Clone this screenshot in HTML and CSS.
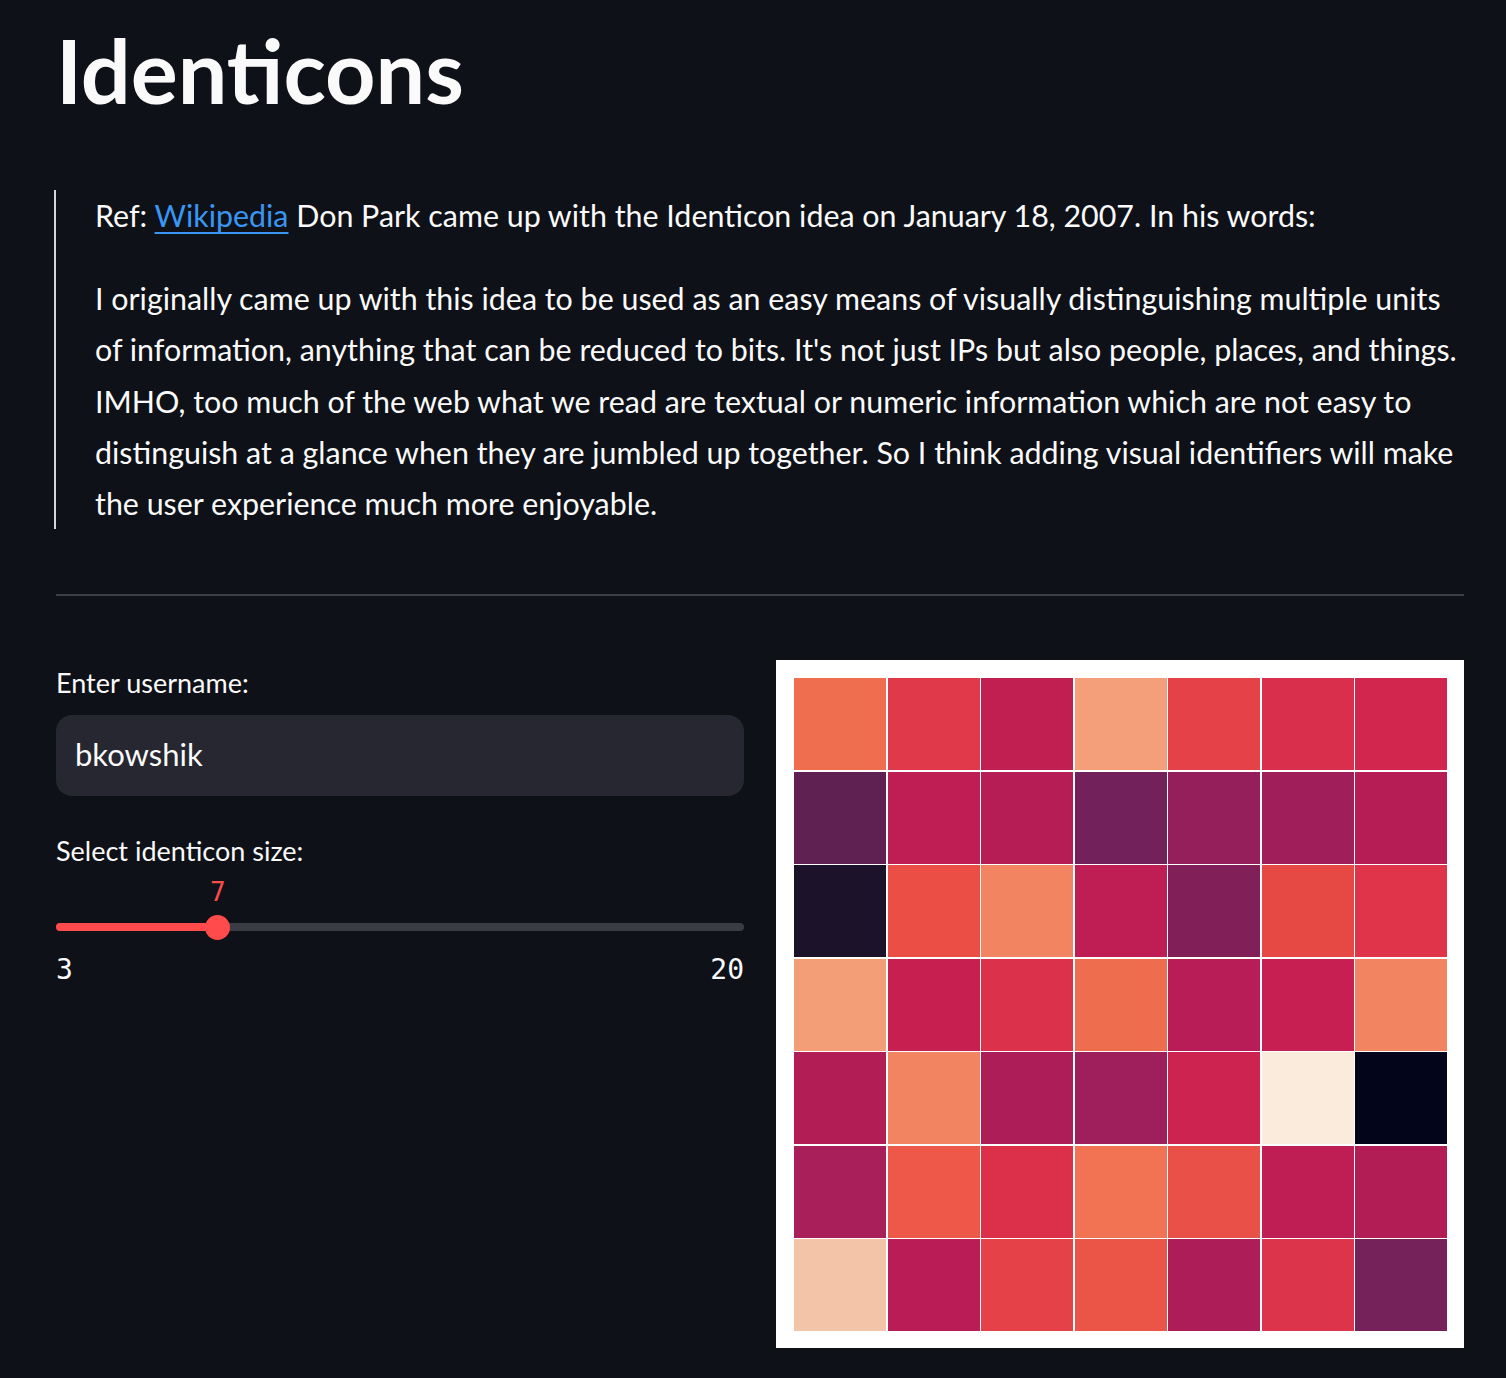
FILE: index.html
```html
<!DOCTYPE html>
<html lang="en">
<head>
<meta charset="utf-8">
<title>Identicons</title>
<link rel="stylesheet" href="styles.css">
</head>
<body>
<main class="page">
  <h1 class="title">Identicons</h1>
  <blockquote class="quote">
    <p>Ref: <a class="link" href="#">Wikipedia</a> Don Park came up with the Identicon idea on January 18, 2007. In his words:</p>
    <p>I originally came up with this idea to be used as an easy means of visually distinguishing multiple units of information, anything that can be reduced to bits. It's not just IPs but also people, places, and things. IMHO, too much of the web what we read are textual or numeric information which are not easy to distinguish at a glance when they are jumbled up together. So I think adding visual identifiers will make the user experience much more enjoyable.</p>
  </blockquote>
  <hr class="divider">
  <section class="columns">
    <div class="controls">
      <div class="field">
        <label class="label">Enter username:</label>
        <div class="input">bkowshik</div>
      </div>
      <div class="field">
        <label class="label">Select identicon size:</label>
        <div class="slider">
          <div class="track">
            <div class="fill" style="width:23.53%"></div>
            <div class="thumb" style="left:23.53%"><span class="thumb-value">7</span></div>
          </div>
          <div class="ticks"><span>3</span><span>20</span></div>
        </div>
      </div>
    </div>
    <div class="identicon">
      <div class="grid">
        <i style="background:#f06e50"></i><i style="background:#e0394a"></i><i style="background:#c11f52"></i><i style="background:#f49f7a"></i><i style="background:#e44148"></i><i style="background:#da2e4d"></i><i style="background:#d2264f"></i>
        <i style="background:#5e2151"></i><i style="background:#be1e53"></i><i style="background:#b61d55"></i><i style="background:#73215a"></i><i style="background:#951f5a"></i><i style="background:#a01f5b"></i><i style="background:#b61d55"></i>
        <i style="background:#1c1229"></i><i style="background:#ea4e44"></i><i style="background:#f38461"></i><i style="background:#be1e53"></i><i style="background:#812058"></i><i style="background:#e64844"></i><i style="background:#df3449"></i>
        <i style="background:#f49e78"></i><i style="background:#c81f51"></i><i style="background:#dc314a"></i><i style="background:#ef6d4f"></i><i style="background:#b81d57"></i><i style="background:#c71f51"></i><i style="background:#f38461"></i>
        <i style="background:#b31d56"></i><i style="background:#f38461"></i><i style="background:#ad1d58"></i><i style="background:#9e1f5b"></i><i style="background:#cc2351"></i><i style="background:#faebdd"></i><i style="background:#03061a"></i>
        <i style="background:#a81f5a"></i><i style="background:#ee5848"></i><i style="background:#dc304a"></i><i style="background:#f17353"></i><i style="background:#e95047"></i><i style="background:#be1e53"></i><i style="background:#b31d56"></i>
        <i style="background:#f4c4a8"></i><i style="background:#ba1c55"></i><i style="background:#e44148"></i><i style="background:#eb5547"></i><i style="background:#ad1d58"></i><i style="background:#dc344a"></i><i style="background:#75215a"></i>
      </div>
    </div>
  </section>
</main>
</body>
</html>
```

FILE: styles.css
```css
* { box-sizing: border-box; }

html, body {
  margin: 0;
  padding: 0;
  background: #0e1117;
}

body {
  color: #fafafa;
  font-family: Lato, "Open Sans", sans-serif;
  font-size: 30.4px;
}

.page {
  width: 1408px;
  margin-left: 56px;
  padding-top: 17px;
}

.title {
  margin: 0;
  font-size: 88px;
  font-weight: 700;
  line-height: 106px;
}

.quote {
  margin: 67px 0 0 -2px;
  padding: 0 0 0 39px;
  border-left: 2px solid #d6d6d8;
}

.quote p {
  margin: 0 0 32px 0;
  line-height: 51.2px;
}

.quote p:last-child { margin-bottom: 0; }

.link {
  color: #3a96f2;
  text-decoration: underline;
  text-underline-offset: 5px;
  text-decoration-thickness: 2px;
}

.divider {
  margin: 65px 0 0 0;
  border: 0;
  height: 2px;
  background: #3c3e45;
}

.columns {
  margin-top: 64px;
  display: grid;
  grid-template-columns: 1fr 1fr;
  gap: 32px;
  align-items: start;
}

.controls {
  display: flex;
  flex-direction: column;
  gap: 32px;
}

.field {
  display: flex;
  flex-direction: column;
}

.label {
  font-size: 27px;
  line-height: 46px;
  margin-bottom: 9px;
}

.input {
  height: 81px;
  background: #262730;
  border-radius: 16px;
  padding: 0 19px 4px;
  display: flex;
  align-items: center;
  font-size: 31px;
}

.slider {
  padding-top: 40px;
}

.track {
  position: relative;
  height: 8px;
  border-radius: 4px;
  background: #393b45;
}

.fill {
  height: 100%;
  border-radius: 4px;
  background: #ff4b4b;
}

.thumb {
  position: absolute;
  top: 50%;
  width: 25px;
  height: 25px;
  margin: -12.5px 0 0 -12.5px;
  border-radius: 50%;
  background: #ff4b4b;
}

.thumb-value {
  position: absolute;
  left: 50%;
  bottom: 100%;
  transform: translateX(-50%);
  margin-bottom: 7px;
  color: #ff4b4b;
  font-family: "DejaVu Sans Mono", monospace;
  font-size: 26px;
  line-height: 32px;
}

.ticks {
  display: flex;
  justify-content: space-between;
  margin-top: 23px;
  font-family: "DejaVu Sans Mono", monospace;
  font-size: 28px;
  line-height: 32px;
}

.identicon {
  background: #ffffff;
  padding: 18px 17px 17px 18px;
  aspect-ratio: 1 / 1;
}

.grid {
  display: grid;
  grid-template-columns: repeat(7, 1fr);
  grid-template-rows: repeat(7, 1fr);
  gap: 1.5px;
  height: 100%;
}

.grid i {
  display: block;
}
```
